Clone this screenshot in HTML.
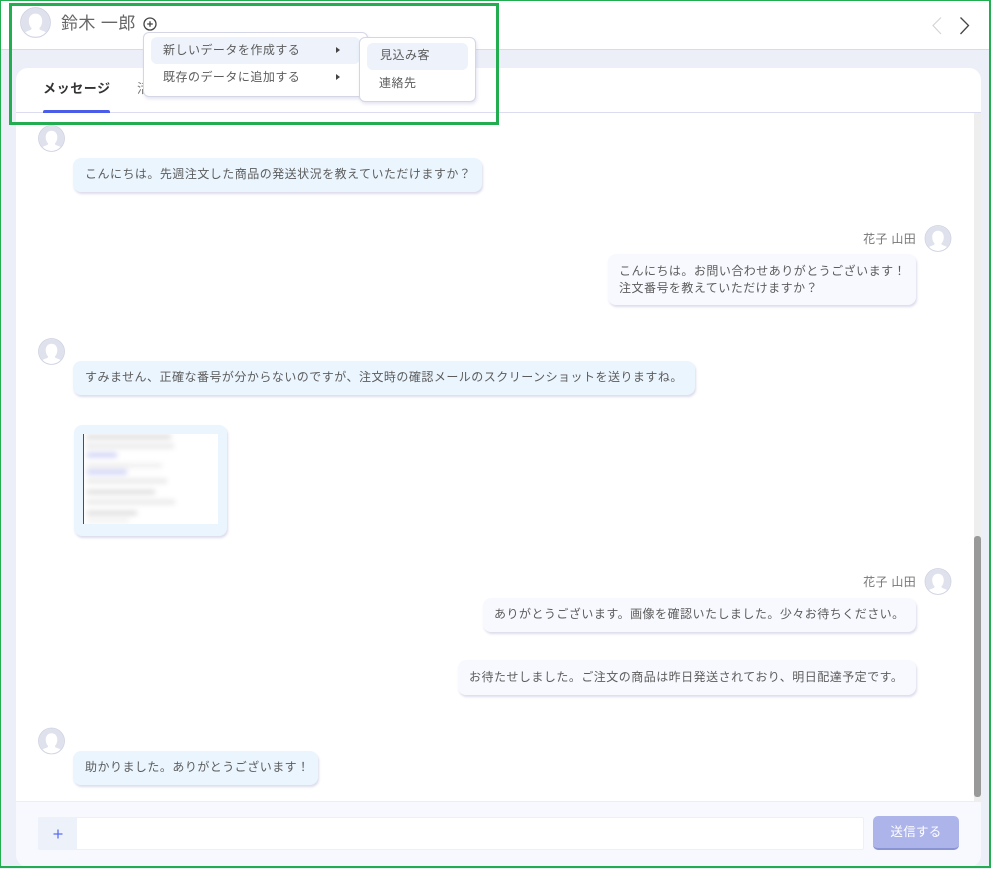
<!DOCTYPE html>
<html lang="ja"><head><meta charset="utf-8"><style>
html,body{margin:0;padding:0}
body{width:991px;height:869px;position:relative;overflow:hidden;background:#eceff8;font-family:"Liberation Sans","Noto Sans CJK JP",sans-serif;color:#555;font-size:12px}
.a{position:absolute;box-sizing:border-box}
.t{position:absolute;white-space:nowrap;line-height:18px;letter-spacing:.48px}
.b{position:absolute;box-sizing:border-box;border-radius:8px;box-shadow:1px 2px 2px rgba(130,130,190,.28);white-space:nowrap;line-height:17px;color:#5c5c5c;letter-spacing:.48px}
.l{background:#ebf5fe}.r{background:#f8f9fe}
svg{position:absolute;display:block}
</style></head><body>
<svg width="0" height="0" style="position:absolute"><defs><symbol id="av" viewBox="0 0 28 28"><circle cx="14" cy="14" r="13.4" fill="#fff" stroke="#d0d3e2" stroke-width="1"/><path d="M14 1a13 13 0 0 0-9.500 21.900c.8-.6 2.800-1.300 4.300-1.900 1.300-.5 1.900-1.100 1.600-2-1.400-1.400-2.400-3.600-2.400-6.600 0-3.600 2.400-6.400 6-6.400s6 2.800 6 6.400c0 3-1 5.200-2.400 6.600-.3.9.3 1.500 1.600 2 1.500.6 3.500 1.300 4.300 1.900A13 13 0 0 0 14 1z" fill="#dfe2ec"/></symbol></defs></svg>

<div class="a" style="left:0;top:0;width:991px;height:50px;background:#fff;border-bottom:1px solid #d9dbea"></div>
<div class="a" style="left:16px;top:68px;width:965px;height:776px;background:#fff;border-radius:12px"></div>
<div class="a" style="left:16px;top:112px;width:965px;height:1px;background:#dcdcf0"></div>
<div class="a" style="left:16px;top:801px;width:965px;height:66px;background:#f8f9fe;border-top:1px solid #eceef5;border-radius:0 0 12px 12px"></div>

<svg style="left:20px;top:7px" width="31" height="31"><use href="#av"/></svg>
<div class="t" style="left:61px;top:12px;font-size:17px;line-height:23px;color:#666;letter-spacing:.4px">鈴木 一郎</div>
<svg style="left:143px;top:17px" width="14" height="14" viewBox="0 0 14 14"><circle cx="7" cy="7" r="6" fill="none" stroke="#444" stroke-width="1.300"/><path d="M7 4.200v5.600M4.200 7h5.600" stroke="#444" stroke-width="1.300"/></svg>
<svg style="left:931px;top:17px" width="12" height="18" viewBox="0 0 12 18"><path d="M10 0.500L2 8.500l8 8.500" fill="none" stroke="#d5d5d5" stroke-width="1.200"/></svg>
<svg style="left:959px;top:17px" width="12" height="18" viewBox="0 0 12 18"><path d="M1.500 0.500L9.500 8.500l-8 8.500" fill="none" stroke="#444" stroke-width="1.300"/></svg>

<div class="t" style="left:43px;top:80px;font-weight:700;font-size:13px;color:#333;letter-spacing:.6px">メッセージ</div>
<div class="a" style="left:43px;top:110px;width:67px;height:3px;background:#4a5ce8;border-radius:2px 2px 0 0"></div>
<div class="t" style="left:137px;top:80px;font-size:13px;color:#777">活動</div>

<div class="a" style="left:143px;top:32px;width:225px;height:65px;background:#fff;border:1px solid #d4d6e6;border-radius:6px;box-shadow:1px 2px 3px rgba(130,130,190,.22)"></div>
<div class="a" style="left:151px;top:37px;width:209px;height:27px;background:#edf2fb;border-radius:6px"></div>
<div class="t" style="left:163px;top:41px;color:#5c5c5c">新しいデータを作成する</div>
<div class="t" style="left:163px;top:68px;color:#5c5c5c">既存のデータに追加する</div>
<div class="a" style="left:336px;top:47px;border-left:4px solid #444;border-top:3.500px solid transparent;border-bottom:3.500px solid transparent"></div>
<div class="a" style="left:336px;top:74px;border-left:4px solid #444;border-top:3.500px solid transparent;border-bottom:3.500px solid transparent"></div>
<div class="a" style="left:359px;top:37px;width:117px;height:65px;background:#fff;border:1px solid #d4d6e6;border-radius:6px;box-shadow:1px 2px 3px rgba(130,130,190,.22)"></div>
<div class="a" style="left:367px;top:43px;width:101px;height:27px;background:#edf2fb;border-radius:6px"></div>
<div class="t" style="left:380px;top:46px;color:#5c5c5c">見込み客</div>
<div class="t" style="left:379px;top:74px;color:#5c5c5c">連絡先</div>

<div class="a" style="left:974px;top:113px;width:7px;height:688px;background:#eeeeee"></div>
<div class="a" style="left:974px;top:536px;width:7px;height:261px;background:#999;border-radius:3px"></div>

<svg style="left:38px;top:125px" width="27" height="27"><use href="#av"/></svg>
<div class="b l" style="left:73px;top:158px;width:409px;height:34px;padding:8px 12px">こんにちは。先週注文した商品の発送状況を教えていただけますか？</div>

<div class="t" style="right:75px;top:230px;color:#777;letter-spacing:.3px">花子 山田</div>
<svg style="left:924px;top:225px" width="28" height="27"><use href="#av"/></svg>
<div class="b r" style="left:608px;top:254px;width:308px;height:51px;padding:9px 11px">こんにちは。お問い合わせありがとうございます！<br>注文番号を教えていただけますか？</div>

<svg style="left:38px;top:338px" width="27" height="27"><use href="#av"/></svg>
<div class="b l" style="left:73px;top:361px;width:622px;height:34px;padding:8px 12px">すみません、正確な番号が分からないのですが、注文時の確認メールのスクリーンショットを送りますね。</div>

<div class="b l" style="left:74px;top:425px;width:153px;height:111px"></div>
<div class="a" style="left:83px;top:434px;width:135px;height:90px;background:#fff;border-left:1px solid #2a4fa8;overflow:hidden">
<div class="a" style="left:2px;top:1px;width:90px;height:88px;filter:blur(2.600px)">
<div class="a" style="left:0;top:0;width:85px;height:4px;background:#d8d8d8"></div>
<div class="a" style="left:0;top:9px;width:88px;height:4px;background:#e4e4e4"></div>
<div class="a" style="left:1px;top:18px;width:30px;height:4px;background:#c6c9f4"></div>
<div class="a" style="left:1px;top:29px;width:75px;height:3px;background:#e6e6e6"></div>
<div class="a" style="left:1px;top:35px;width:40px;height:4px;background:#c6c9f4"></div>
<div class="a" style="left:1px;top:44px;width:80px;height:4px;background:#e4e4e4"></div>
<div class="a" style="left:1px;top:55px;width:68px;height:4px;background:#d8d8d8"></div>
<div class="a" style="left:1px;top:65px;width:88px;height:4px;background:#e4e4e4"></div>
<div class="a" style="left:1px;top:76px;width:50px;height:4px;background:#d8d8d8"></div>
<div class="a" style="left:1px;top:84px;width:42px;height:3px;background:#ebebeb"></div>
</div></div>

<div class="t" style="right:75px;top:573px;color:#777;letter-spacing:.3px">花子 山田</div>
<svg style="left:924px;top:568px" width="28" height="27"><use href="#av"/></svg>
<div class="b r" style="left:483px;top:598px;width:433px;height:34px;padding:8px 11px">ありがとうございます。画像を確認いたしました。少々お待ちください。</div>
<div class="b r" style="left:458px;top:660px;width:458px;height:35px;padding:9px 11px">お待たせしました。ご注文の商品は昨日発送されており、明日配達予定です。</div>

<svg style="left:38px;top:727px" width="27" height="28"><use href="#av"/></svg>
<div class="b l" style="left:73px;top:751px;width:245px;height:34px;padding:8px 12px">助かりました。ありがとうございます！</div>

<div class="a" style="left:38px;top:817px;width:826px;height:33px;background:#fff;border:1px solid #eef0f6;border-radius:2px"></div>
<div class="a" style="left:38px;top:817px;width:39px;height:33px;background:#edf1fa;border-radius:2px 0 0 2px"></div>
<svg style="left:53px;top:829px" width="10" height="10" viewBox="0 0 10 10"><path d="M5 .5v9M.5 5h9" stroke="#5a6ef0" stroke-width="1.300"/></svg>
<div class="a" style="left:873px;top:816px;width:86px;height:34px;background:#adb4e9;border-bottom:2px solid #8a94d4;border-radius:5px;color:#fff;text-align:center;line-height:33px;font-size:12.500px;letter-spacing:.3px">送信する</div>

<div class="a" style="left:0;top:0;width:991px;height:868px;border:1px solid #22ad50;border-bottom-width:2px;border-right-width:2px"></div>
<div class="a" style="left:9px;top:3px;width:490px;height:122px;border:3px solid #22ad50"></div>
</body></html>
